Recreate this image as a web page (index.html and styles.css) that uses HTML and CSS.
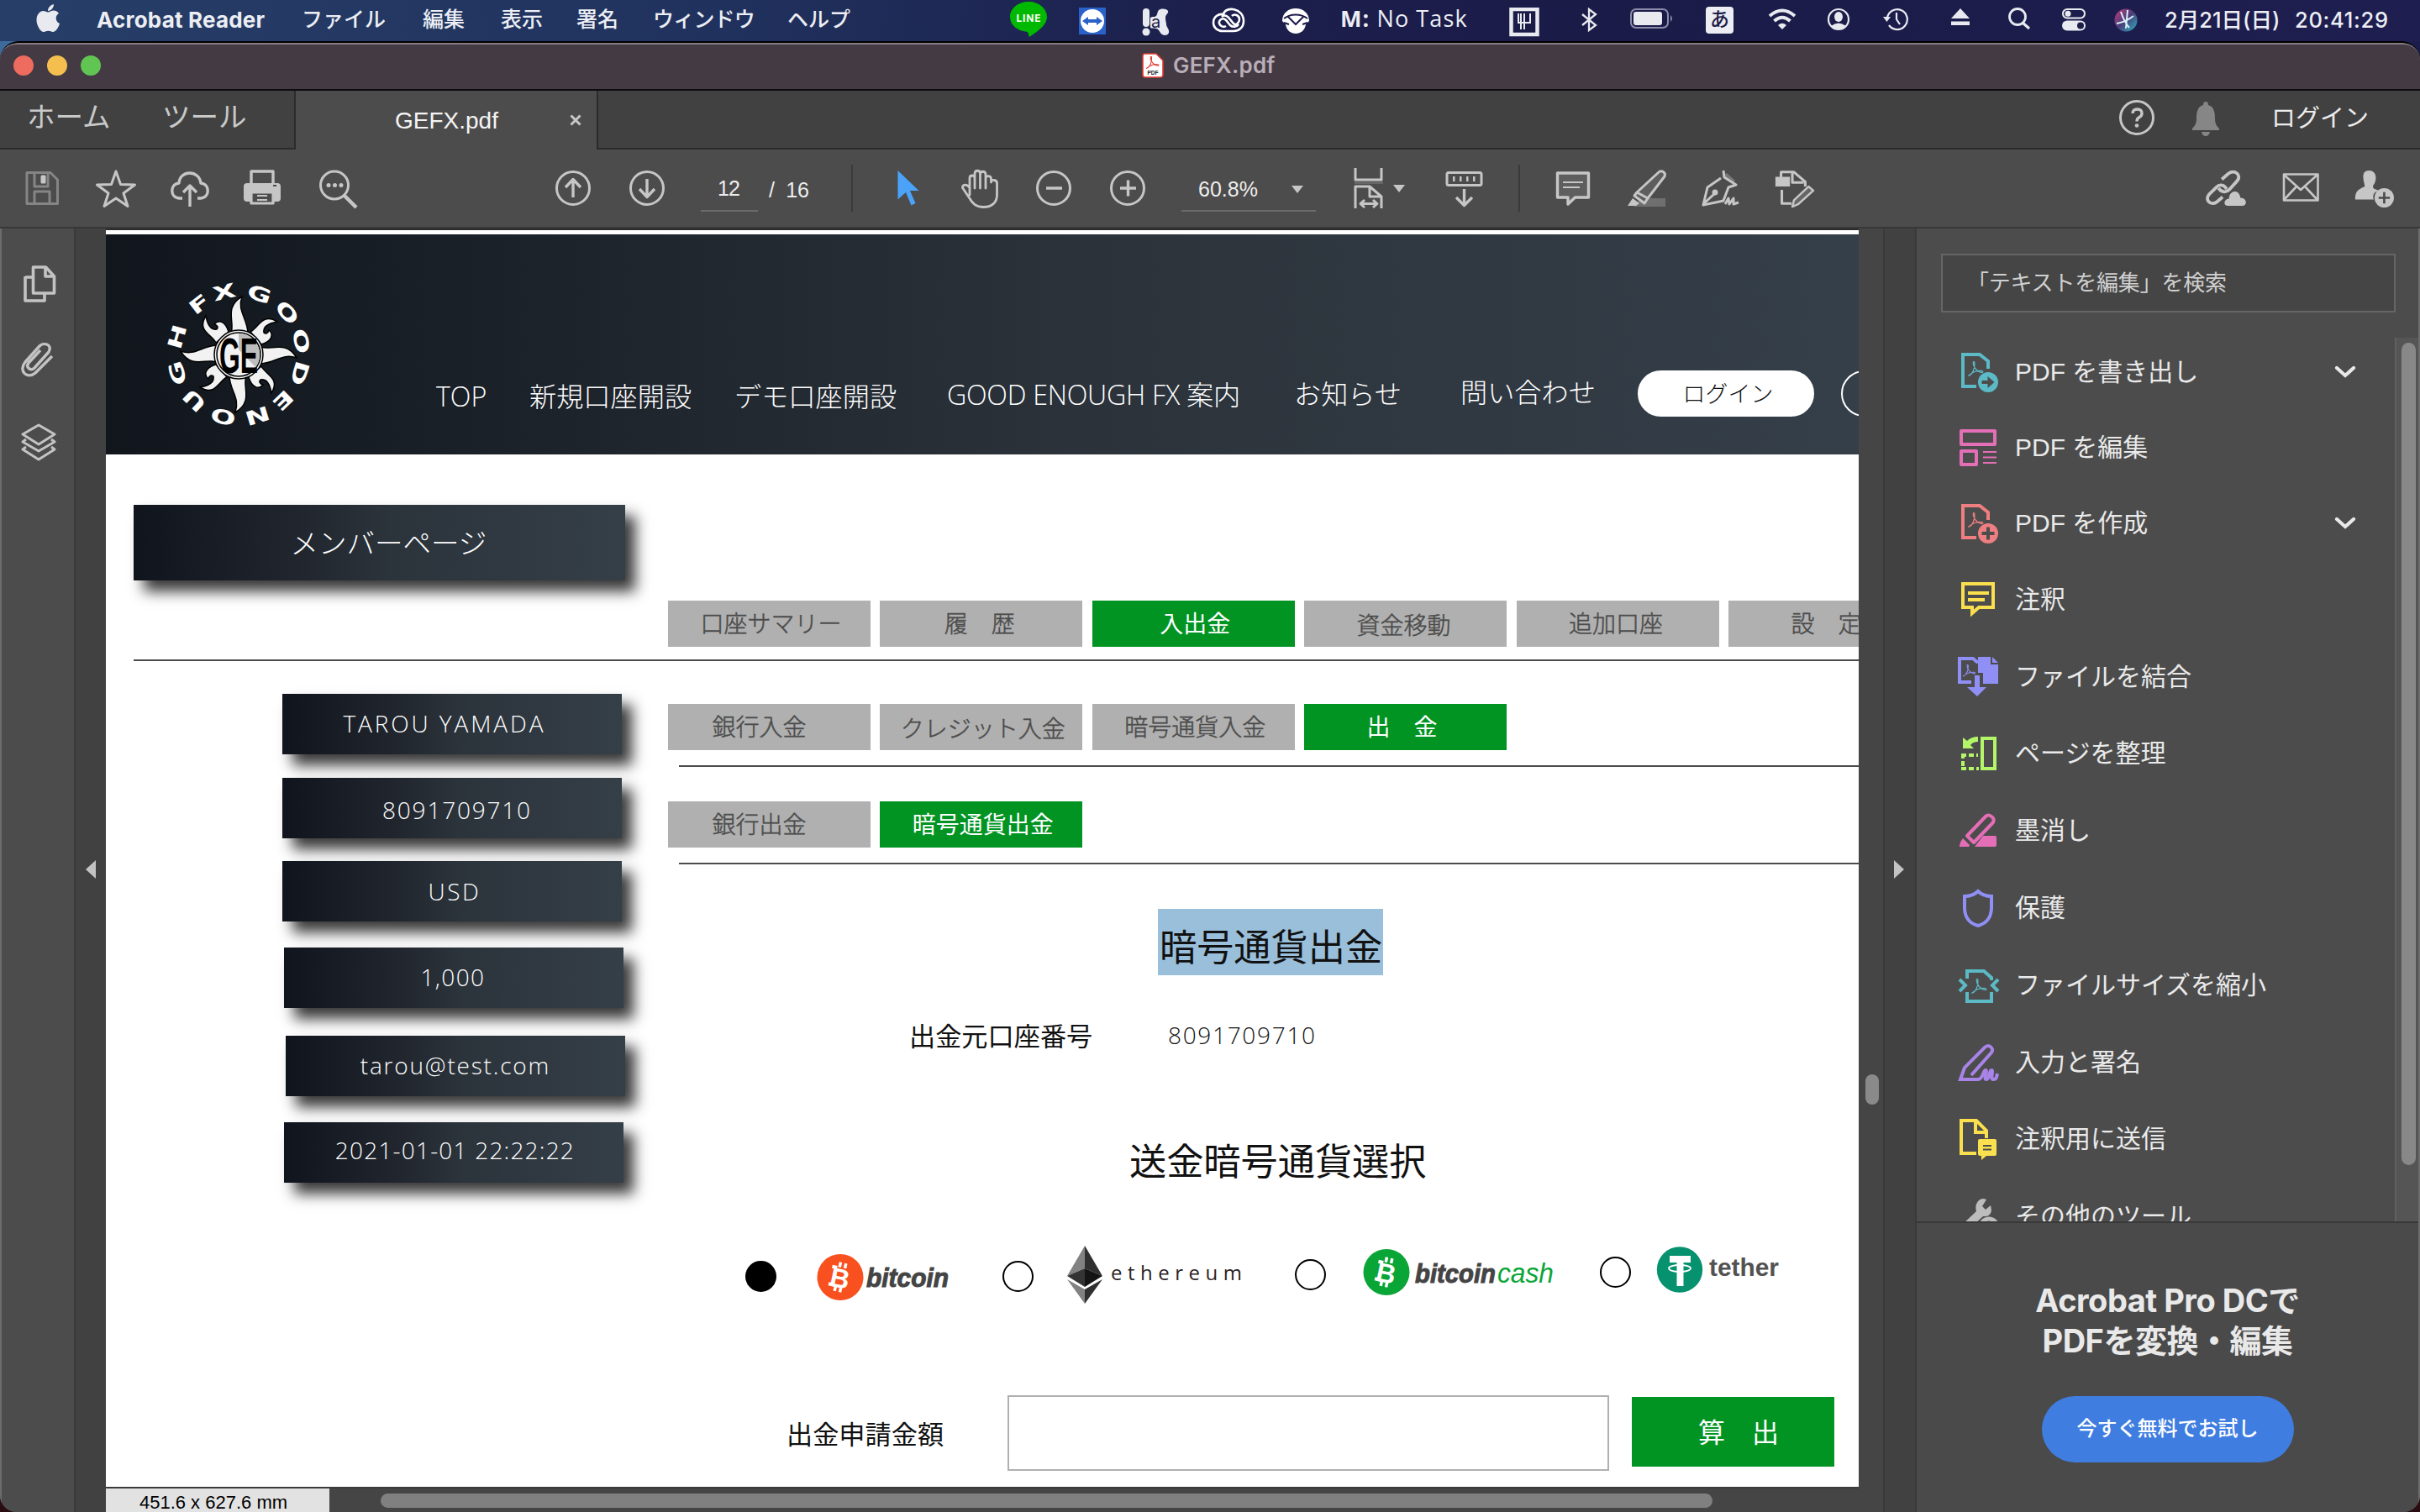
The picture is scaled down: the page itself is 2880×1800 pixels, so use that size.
FILE: index.html
```html
<!DOCTYPE html>
<html lang="ja">
<head>
<meta charset="utf-8">
<title>GEFX.pdf</title>
<link rel="stylesheet" href="styles.css">
</head>
<body>
<svg class="defs" width="0" height="0">
  <defs>
    <g id="pdfmark"><path d="M3 21C8 19 11 10 10.500 4C10.500 1 8.500 1 8.500 4C9 10 14 16 20 17C23 17.500 23 14.500 19.500 14.500C13 14.500 7 17 4 20C2 22 1 21.500 3 21Z" fill="none" stroke="currentColor" stroke-width="1.500"/></g>
    <linearGradient id="siri" x1="0" y1="0" x2="1" y2="1"><stop offset="0" stop-color="#c2397c"/><stop offset=".5" stop-color="#4a3f7a"/><stop offset="1" stop-color="#2bb7c4"/></linearGradient>
  </defs>
</svg>

<nav class="menubar">
  <svg viewBox="42 4 30 36" width="30" height="36"><path fill="#e8eaf0" d="M64 5c0 4-3 8-7 8 0-4 3-7 7-8zM57 14.500c2 0 4-2 7-2 2 0 4.500 1 6 3.500-5 3-4 10 1 12-1 4-4.500 10-8 10-2 0-3-1.200-5.500-1.200S54 38 52 38c-4 0-8.500-8-8.500-14 0-7 4-11 8-11 2.300 0 4 1.500 5.500 1.500z"/></svg>
  <b class="app">Acrobat Reader</b><span>ファイル</span><span>編集</span><span>表示</span><span>署名</span><span class="tight">ウィンドウ</span><span>ヘルプ</span>
  <svg viewBox="1202 1 44 44" width="44" height="44"><path fill="#00b900" d="M1224 2c12 0 22 8 22 18 0 9-9 16-21 24l-2-6c-12-1-21-8-21-18s10-18 22-18z"/><text class="line-t" x="1224" y="25.500" text-anchor="middle" textLength="29">LINE</text></svg>
  <svg viewBox="1284 8 32 32" width="32" height="32"><path fill="#2a62c9" d="M1284 8h32v32h-32z"/><circle cx="1300" cy="24" r="14" fill="#fff"/><path fill="#2a62c9" d="M1288 24l7-5v3h10v-3l7 5-7 5v-3h-10v3z"/></svg>
  <svg viewBox="1358 7 36 34" width="36" height="34"><g fill="#e8eaf0"><rect x="1360" y="8" width="8" height="22" rx="4"/><circle cx="1364" cy="36" r="4.500"/><path d="M1369 19c3-2 4 0 7-2 2-3 1-7 5-8 4-1 8 0 9 2 1 3-3 4-3 8s1 5 1 8 4 6 3 10c-1 3-5 4-8 2s-3-6-7-7-5 0-7-1z"/></g><text x="1370" y="31" font-size="20" fill="#1c1c48">a</text></svg>
  <svg viewBox="1442 11 40 30" width="40" height="30"><path fill="none" stroke="#fff" stroke-width="2.600" d="M1456 19c2-10 24-8 24 8 0 8-6 12-12 12h-13c-6 0-11-4-11-10 0-7 6-11 12-10zM1474 31c-2 3-7 4-10 1l-5-6c-4-4-9 0-8 4 1 3 5 5 8 3M1454 22c3-3 7-1 9 2l5 6c3 3 7-1 7-5 0-5-6-7-9-4"/></svg>
  <svg viewBox="1524 8 36 32" width="36" height="32"><path fill="#fff" d="M1526 24c0-9 7-15 16-15s16 6 16 15l-4 4c-1 7-6 11-12 11s-11-4-12-11z"/><path fill="none" stroke="#1c1c48" stroke-width="2" d="M1528 21c8-6 20-6 28 0M1533 19l9 9 9-9M1528 26l6 2M1556 26l-6 2"/></svg>
  <span class="task"><b>M:</b> No Task</span>
  <svg viewBox="1796 7 36 35" width="36" height="35"><rect x="1798.500" y="9" width="31" height="30" fill="none" stroke="#e8eaf0" stroke-width="4.500"/><path d="M1807 14v11h14V14M1814 14v19M1810 14v19" fill="none" stroke="#e8eaf0" stroke-width="2"/></svg>
  <svg viewBox="1880 7 24 30" width="24" height="30"><path d="M1883 15l16 13-8 6V9l8 6-16 13" fill="none" stroke="#e8eaf0" stroke-width="2.300"/></svg>
  <svg viewBox="1938 11 54 26" width="54" height="26"><rect x="1941" y="13" width="44" height="22" rx="6" fill="none" stroke="#8c8cab" stroke-width="2"/><rect x="1944" y="16" width="34" height="16" rx="3" fill="#e8eaf0"/><path d="M1988 20q4 4 0 8z" fill="#8c8cab"/></svg>
  <span class="ime">あ</span>
  <svg viewBox="2102 10 38 27" width="38" height="27"><path d="M2106 20q15-13 30 0M2111.500 26q9.500-8.500 19 0" fill="none" stroke="#e8eaf0" stroke-width="4"/><path d="M2116 31q5-4.500 10 0l-5 5z" fill="#e8eaf0"/></svg>
  <svg viewBox="2174 11 30 28" width="30" height="28"><circle cx="2188" cy="25" r="12" fill="none" stroke="#e8eaf0" stroke-width="2.200"/><ellipse cx="2188" cy="22" rx="5" ry="6" fill="#e8eaf0"/><path d="M2179 33q9-7 18 0-9 8-18 0z" fill="#e8eaf0"/></svg>
  <svg viewBox="2241 11 32 28" width="32" height="28"><path d="M2246 23a12 12 0 1 1 2 9M2257 17v8l4 6" fill="none" stroke="#e8eaf0" stroke-width="2.200"/><path d="M2241 22h9l-4.500 6z" fill="#e8eaf0"/></svg>
  <svg viewBox="2321 13 24 23" width="24" height="23"><path d="M2333 14l11 12h-22zM2322 29.500h22v4.500h-22z" fill="#e8eaf0"/></svg>
  <svg viewBox="2390 11 28 28" width="28" height="28"><circle cx="2401" cy="22" r="9.500" fill="none" stroke="#e8eaf0" stroke-width="2.800"/><path d="M2407 29l8 7" stroke="#e8eaf0" stroke-width="3.200"/></svg>
  <svg viewBox="2453 11 32 29" width="32" height="29"><rect x="2455" y="13" width="26" height="10.500" rx="5.200" fill="none" stroke="#e8eaf0" stroke-width="2"/><circle cx="2461" cy="18.200" r="3.500" fill="#e8eaf0"/><rect x="2454" y="26.500" width="28" height="12" rx="6" fill="#e8eaf0"/><circle cx="2476" cy="32.500" r="4" fill="#1c1c48"/></svg>
  <svg viewBox="2515 10 30 30" width="30" height="30"><circle cx="2530" cy="25" r="13.500" fill="url(#siri)"/><path d="M2519 29q11-2 20-9M2524 15q4 12 10 19M2530 35l2-22" stroke="#d8f2f8" stroke-width="2" fill="none"/></svg>
  <span class="clock">2月21日(日)</span><span class="clock time">20:41:29</span>
</nav>

<div class="window">
  <header class="titlebar">
    <i class="light red"></i><i class="light yellow"></i><i class="light green"></i>
    <div class="wtitle">
      <svg viewBox="0 0 26 30" width="26" height="30"><path d="M3 1h14l8 8v17q0 3-3 3H4q-3 0-3-3V4q0-3 2-3z" fill="#fff" stroke="#e0372c" stroke-width="1.600"/><g color="#e0372c" transform="translate(4 3) scale(.72)"><use href="#pdfmark"/></g><text x="6.500" y="26" class="pdf-t" textLength="13">PDF</text></svg>
      <b>GEFX.pdf</b>
    </div>
  </header>

  <div class="tabbar">
    <span class="home">ホーム</span><span class="tools-tab">ツール</span>
    <div class="tab"><span>GEFX.pdf</span><svg width="14" height="14" viewBox="0 0 14 14"><path d="M1.500 1.500l11 11M12.500 1.500l-11 11" stroke="#c8c8c8" stroke-width="3"/></svg></div>
    <svg class="help" viewBox="0 0 44 44" width="44" height="44"><circle cx="22" cy="22" r="19.500" fill="none" stroke="#c6c6c6" stroke-width="3"/><path d="M17 17q0-5 5.500-5t5.500 5q0 3-3 4.500t-3 5" fill="none" stroke="#c6c6c6" stroke-width="3.400"/><circle cx="22" cy="31.500" r="2.300" fill="#c6c6c6"/></svg>
    <svg class="bell" viewBox="0 0 36 42" width="36" height="42"><path d="M15 5q0-4 3-4t3 4c7 2 8 9 8 16 0 6 2 9 5 12v2H2v-2c3-3 5-6 5-12 0-7 1-14 8-16zM13 37h10q-1 5-5 5t-5-5z" fill="#868686"/></svg>
    <span class="signin">ログイン</span>
  </div>

  <div class="toolbar">
    <svg viewBox="28 200 48 48"><g fill="none" stroke="#858585" stroke-width="3"><path d="M32 205.500H60L68.500 214V242.500H32zM41 206v16h16v-16M41 242v-14h18v14" /></g><path d="M50 210h3v7h-3z" fill="#858585"/></svg>
    <svg viewBox="114 200 48 48"><path d="M138 204l5.500 15.500 17 .500-13.500 10 5 15.500-14-9.500-14 9.500 5-15.500-13.500-10 17-.500z"/></svg>
    <svg viewBox="202 200 48 48"><path d="M217 236h-4c-11-1-11-17 0-18 1-16 24-16 26 0 11 1 11 17 0 18h-4M226 246V222M218 229l8-8 8 8" stroke-width="3.400"/></svg>
    <svg viewBox="288 200 48 48"><path d="M299 218v-14h26v14" stroke-width="3.400"/><path d="M290 222q0-4 4-4h36q4 0 4 4v14q0 4-4 4h-36q-4 0-4-4z" fill="#c6c6c6" stroke="none"/><path d="M299 229h26v13h-26z" fill="#4c4c4c" stroke-width="3.200"/><path d="M306 233h12M306 238h12" stroke-width="2"/><path d="M325 220h4v2h-4z" fill="#4c4c4c" stroke="none"/></svg>
    <svg viewBox="378 200 48 48"><circle cx="398" cy="220.500" r="16.500" stroke-width="3"/><path d="M410 233l14 14" stroke-width="4.500"/><g fill="#c6c6c6" stroke="none"><circle cx="391" cy="220.500" r="2.500"/><circle cx="398.500" cy="220.500" r="2.500"/><circle cx="406" cy="220.500" r="2.500"/></g></svg>
    <svg viewBox="658 200 48 48"><circle cx="682" cy="224" r="19.500"/><path d="M682 235v-21M673 223l9-9.500 9 9.500" stroke-width="3.400"/></svg>
    <svg viewBox="746 200 48 48"><circle cx="770" cy="224" r="19.500"/><path d="M770 213v21M761 225l9 9.500 9-9.500" stroke-width="3.400"/></svg>
    <span class="page-in">12</span><span class="page-of">/&nbsp; 16</span>
    <i class="sep"></i>
    <svg viewBox="1063 200 48 48"><path d="M1067.500 203l25 24h-10.500l6.500 15-5 2.500-6.500-15.500-9.500 8.500z" fill="#4aa3f8" stroke="none"/></svg>
    <svg viewBox="1142 200 48 48"><path d="M1154 232v-20c0-4 6-4 6 0v12-17c0-5 6.500-5 6.500 0v17-16c0-5 6.500-5 6.500 0v16-11c0-5 6.500-4 6.500 0v4c0-4 7-3 7 1v14c0 9-6 14.500-16 14.500-9 0-13-4-17-11l-8-12c0-4 5-5 8.500 0z" stroke-width="2.800"/></svg>
    <svg viewBox="1228 199 48 48"><circle cx="1253" cy="223" r="19.500"/><path d="M1244 223h19" stroke-width="3.400"/></svg>
    <svg viewBox="1316 199 48 48"><circle cx="1341" cy="223" r="19.500"/><path d="M1332 223h19M1341.500 213.500v19" stroke-width="3.400"/></svg>
    <span class="zoom">60.8%<i class="tri"></i></span>
    <svg class="wide" viewBox="1608 200 66 48"><path d="M1613 200v14h31v-14M1613 248v-26h17l14 12v14M1630 222v12h14M1620 242.500h18M1624 238l-5 4.500 5 4.500M1634 238l5 4.500-5 4.500" stroke-width="3"/><path d="M1612 216h34v3h-34z" fill="#666" stroke="none"/><path d="M1658 220h14l-7 9z" fill="#c6c6c6" stroke="none"/></svg>
    <svg viewBox="1717 200 48 48"><rect x="1721" y="205.500" width="41" height="15" rx="2"/><path d="M1728 213h2.500M1736 213h2.500M1744 213h2.500M1752 213h2.500" stroke-width="6"/><path d="M1741.500 225v19M1732 235l9.500 9.500 9.500-9.500" stroke-width="3.400"/></svg>
    <i class="sep"></i>
    <svg viewBox="1850 200 48 48"><path d="M1853.500 206h37v29h-16l-8.500 8v-8h-12.500z" fill="#5e5e5e" stroke-width="3.400"/><path d="M1860 217h24M1860 223h20" stroke-width="2"/></svg>
    <svg viewBox="1934 200 48 48"><path d="M1952 236h30v10h-38z" fill="#6f6f6f" stroke="none"/><path d="M1974 205c3-3 9 0 7 5l-20 26-13-7zM1948 229l-3 4 12 9 4-6" fill="#5e5e5e" stroke-width="3"/><path d="M1943 236l8 6-4 3h-10z" fill="#c6c6c6" stroke="none"/></svg>
    <svg viewBox="2022 200 48 48"><path d="M2055 206l10 9 -3 4-12-10z" fill="#777" stroke="none"/><path d="M2051 203l1 8 14 9-9 3-6 16-24 5 5-21 16-11M2028 242l12-11" stroke-width="3"/><circle cx="2041" cy="229" r="3.500" fill="#c6c6c6" stroke="none"/><path d="M2053 243l4-7 1 7 5-7 0 7 6-2" stroke-width="3"/></svg>
    <svg viewBox="2109 200 50 48"><path d="M2119 211v-7h16l14 12v6M2133 204v13h14M2120 226v17h12" stroke-width="3.200"/><path d="M2112 210h18v12h-18z" fill="#c6c6c6" stroke="none"/><path d="M2153 222l6 5-19 17-7 3 2-8z" fill="#666" stroke-width="2.600"/></svg>
    <svg viewBox="2623 200 50 48"><path d="M2644 213l8-7c8-6 17 2 11 9l-10 11c-4 4-10 3-13-2M2650 225c-4-6-9-6-13-2l-9 9c-6 8 4 14 10 9l7-6" stroke-width="4"/><path d="M2651 246c-6-1-4-9 2-9 0-11 13-12 14-1 8 0 9 9 3 10z" fill="#c6c6c6" stroke="none"/></svg>
    <svg viewBox="2714 200 48 48"><path d="M2718 207.500h40.500v31h-40.500zM2718 208l20 18 20-18M2718 238l15-16M2758 238l-15-16" stroke-width="2.600"/></svg>
    <svg viewBox="2799 200 50 48"><path d="M2819 202c11 0 10 14 5 19 0 5 3 4 7 6-8 2-7 8-6 11h-23c0-10 3-12 12-16 0-4-7-20 5-20z" fill="#c6c6c6" stroke="none"/><circle cx="2838" cy="236" r="12" fill="#c6c6c6" stroke="none"/><path d="M2831 236h14M2838 229v14" stroke="#4c4c4c" stroke-width="2.800"/></svg>
  </div>

  <div class="work">
    <aside class="rail">
      <svg viewBox="23 312 46 50" width="46" height="50"><path d="M30 330h9M30 329v29h23v-8" stroke-width="3.600"/><path d="M39.500 318h15l10 11v20h-25zM54 318v11h10" stroke-width="3.600"/></svg>
      <svg viewBox="22 406 46 46" width="46" height="46"><path d="M48 416l-14 15c-4 6 3 10 7 6l17-19c5-9-6-12-11-7l-17 19c-9 11 3 21 12 13l20-20" stroke-width="3.400" transform="translate(-1 1)"/></svg>
      <svg viewBox="22 502 46 50" width="46" height="50"><path d="M45 506l19 11-19 12-19-12zM30 523l-4 3 19 11 19-11-4-3M30 532l-4 3 19 12 19-12-4-3" stroke-width="3"/></svg>
    </aside>
    <div class="gutter left"><i></i></div>

    <section class="viewer">
      <div class="page">
        <header class="site">
          <svg class="logo" viewBox="-91 -91 180 180" width="180" height="180">
            <g class="ring" fill="#fff" text-anchor="middle">
              <text transform="rotate(19) scale(1.550 1)" y="-68">G</text><text transform="rotate(49) scale(1.550 1)" y="-68">O</text><text transform="rotate(78) scale(1.550 1)" y="-68">O</text><text transform="rotate(107) scale(1.550 1)" y="-68">D</text><text transform="rotate(136) scale(1.550 1)" y="-68">E</text><text transform="rotate(163) scale(1.550 1)" y="-68">N</text><text transform="rotate(194) scale(1.550 1)" y="-68">O</text><text transform="rotate(224) scale(1.550 1)" y="-68">U</text><text transform="rotate(253) scale(1.550 1)" y="-68">G</text><text transform="rotate(286) scale(1.550 1)" y="-68">H</text><text transform="rotate(322) scale(1.550 1)" y="-68">F</text><text transform="rotate(347) scale(1.550 1)" y="-68">X</text>
            </g>
            <g fill="#f2f2f2" stroke="#000" stroke-width="1.500">
              <path id="ray" d="M-9 -26C-4 -38 -18 -56 4 -69C-2 -52 10 -44 11 -26Z"/><use href="#ray" transform="rotate(90)"/><use href="#ray" transform="rotate(180)"/><use href="#ray" transform="rotate(270)"/>
              <path id="curl" d="M-27 -14C-32 -24 -50 -28 -39 -46C-37 -34 -32 -29 -26 -30C-24 -32 -25 -35 -29 -36C-24 -42 -16 -40 -12 -27Z"/><use href="#curl" transform="rotate(90)"/><use href="#curl" transform="rotate(180)"/><use href="#curl" transform="rotate(270)"/>
              <circle r="29"/><circle r="26" fill="#f2f2f2"/>
            </g>
            <path d="M0 -25a25 25 0 0 1 20 40L0 -6z" fill="#bdbdbd"/>
            <text class="ge" y="22" text-anchor="middle" textLength="46" lengthAdjust="spacingAndGlyphs">GE</text>
          </svg>
          <div class="nav">
            <span>TOP</span><span>新規口座開設</span><span>デモ口座開設</span><span class="gefx">GOOD ENOUGH FX 案内</span><span class="up3">お知らせ</span><span class="up5">問い合わせ</span>
            <span class="pill">ログイン</span><span class="pill ghost"></span>
          </div>
        </header>

        <h1 class="member">メンバーページ</h1>
        <div class="tabs main-tabs"><span>口座サマリー</span><span class="m">履　歴</span><span class="on">入出金</span><span class="low m">資金移動</span><span class="m">追加口座</span><span class="mm">設　定</span></div>
        <hr class="rule full">

        <div class="cols">
          <div class="cards">
            <span class="c1">TAROU YAMADA</span><span class="c2">8091709710</span><span class="c3">USD</span><span class="c4">1,000</span><span class="c5">tarou@test.com</span><span class="c6">2021-01-01 22:22:22</span>
          </div>
          <div class="content">
            <div class="tabs sub1"><span class="l">銀行入金</span><span class="low">クレジット入金</span><span>暗号通貨入金</span><span class="on mm">出　金</span></div>
            <hr class="rule">
            <div class="tabs sub2"><span class="l">銀行出金</span><span class="on">暗号通貨出金</span></div>
            <hr class="rule">
            <h2><mark>暗号通貨出金</mark></h2>
            <div class="acct"><span>出金元口座番号</span><span class="num">8091709710</span></div>
            <h2 class="choose">送金暗号通貨選択</h2>
            <div class="coins">
              <i class="radio sel"></i>
              <svg class="btc" viewBox="972 1484 162 72" width="162" height="72"><circle cx="1000" cy="1521.500" r="27.500" fill="#f9501f"/><g transform="rotate(12 1000 1521.500)" fill="#fff"><text class="bsym" x="1000" y="1534" text-anchor="middle">B</text><path d="M995 1504h3.500v6h-3.500zM1001.500 1504h3.500v6h-3.500zM995 1533h3.500v6h-3.500zM1001.500 1533h3.500v6h-3.500zM988 1509h6v4h-6zM988 1530h6v4h-6z"/></g><text class="brand" x="1031" y="1533" textLength="98" lengthAdjust="spacingAndGlyphs">bitcoin</text></svg>
              <i class="radio r2"></i>
              <svg class="eth" viewBox="1268 1482 214 74" width="214" height="74"><path d="M1291 1484l-21 36 21-9z" fill="#828282"/><path d="M1291 1484l21 36-21-9z" fill="#303030"/><path d="M1270 1520l21-9v22z" fill="#343434"/><path d="M1312 1520l-21-9v22z" fill="#141414"/><path d="M1270 1524l21 12v17z" fill="#828282"/><path d="M1312 1524l-21 12v17z" fill="#303030"/><text class="etht" x="1322" y="1524.500" textLength="156">ethereum</text></svg>
              <i class="radio r3"></i>
              <svg class="bch" viewBox="1622 1484 230 64" width="230" height="64"><circle cx="1650" cy="1515.500" r="27.500" fill="#0aa537"/><g transform="rotate(12 1650 1515.500)" fill="#fff"><text class="bsym" x="1650" y="1528" text-anchor="middle">B</text><path d="M1645 1498h3.500v6h-3.500zM1651.500 1498h3.500v6h-3.500zM1645 1527h3.500v6h-3.500zM1651.500 1527h3.500v6h-3.500zM1638 1503h6v4h-6zM1638 1524h6v4h-6z"/></g><text class="brand" x="1684" y="1528" textLength="96" lengthAdjust="spacingAndGlyphs">bitcoin</text><text class="cash" x="1782" y="1528" textLength="67" lengthAdjust="spacingAndGlyphs">cash</text></svg>
              <i class="radio r4"></i>
              <svg class="usdt" viewBox="1971 1484 152 58" width="152" height="58"><circle cx="1999" cy="1513.500" r="27.200" fill="#06916f"/><path d="M1987 1497h25v8h-8.500v28h-8v-28H1987z" fill="#fff"/><ellipse cx="1999" cy="1512" rx="13" ry="4" fill="none" stroke="#fff" stroke-width="1.800"/><text class="teth" x="2034" y="1521" textLength="83" lengthAdjust="spacingAndGlyphs">tether</text></svg>
            </div>
            <div class="amount"><span>出金申請金額</span><i class="field"></i><span class="calc">算　出</span></div>
          </div>
        </div>
      </div>
      <div class="hbar"><span class="size">451.6 x 627.6 mm</span><i class="hthumb"></i></div>
    </section>
    <div class="vbar"><i></i></div>
    <div class="gutter right"><i></i></div>

    <aside class="panel">
      <div class="search">「テキストを編集」を検索</div>
      <div class="list">
        <ul>
          <li class="s"><svg color="#5bbac5" viewBox="0 0 50 50"><path d="M21 42H5V4H25L35 12V21" stroke-width="4"/><g transform="translate(10 11) scale(.85)"><use href="#pdfmark"/></g><circle cx="35" cy="37" r="12" fill="currentColor" stroke="none"/><path d="M27.500 35h7v-5l8 7-8 7v-5h-7z" fill="#4c4c4c" stroke="none"/></svg>PDF を書き出し<svg class="chev" viewBox="0 0 26 16"><path d="M3 3l10 9 10-9" stroke-width="4.200"/></svg></li>
          <li class="s"><svg color="#e46fb6" viewBox="0 0 50 50"><path d="M3 5h40v16H3zM3 29h18v16H3z" stroke-width="4" stroke-linejoin="round"/><path d="M29 30h16M29 36.500h16M29 43h16" stroke-width="2.200"/></svg>PDF を編集</li>
          <li class="s"><svg color="#ee7e80" viewBox="0 0 50 50"><path d="M21 42H5V4H25L35 12V21" stroke-width="4"/><g transform="translate(10 11) scale(.85)"><use href="#pdfmark"/></g><circle cx="35" cy="37" r="12" fill="currentColor" stroke="none"/><path d="M27.500 37h15M35 29.500v15" stroke="#4c4c4c" stroke-width="4"/></svg>PDF を作成<svg class="chev" viewBox="0 0 26 16"><path d="M3 3l10 9 10-9" stroke-width="4.200"/></svg></li>
          <li><svg color="#fae04f" viewBox="0 0 50 50"><path d="M5 6h36v28H24l-8 7v-7H5z" stroke-width="4"/><path d="M11 17h25M11 25h20" stroke-width="4"/></svg>注釈</li>
          <li><svg color="#908ff5" viewBox="0 0 50 50"><path d="M15 31H1V3h16l6 5" stroke-width="4"/><g transform="translate(4 9) scale(.7)"><use href="#pdfmark"/></g><path d="M23 1h15v9h9v23H29V20h-6zM40 1l7 7h-7z" fill="currentColor" stroke="none"/><path d="M19 23h6v14h8L22 48 10 37h9z" fill="currentColor" stroke="none"/></svg>ファイルを結合</li>
          <li><svg color="#b4f669" viewBox="0 0 50 50"><path d="M28 7h15v36H28z" stroke-width="4"/><path d="M3 27h20M5 25v20M3 43h21" stroke-width="4" stroke-dasharray="6 3"/><path d="M23 5v6q-6 0-9 4l4 4H5V6l5 4q5-5 13-5z" fill="currentColor" stroke="none"/></svg>ページを整理</li>
          <li><svg color="#e46fb6" viewBox="0 0 50 50"><path d="M32 8q3-3 7 0t2 7L18 39l-8-8z" stroke-width="4" stroke-linejoin="round"/><path d="M5 34l8 8-1 2H1q0-5 4-10zM29 31h14q2 0 2 2v9q0 2-2 2H19z" fill="currentColor" stroke="none"/></svg>墨消し</li>
          <li><svg color="#908ff5" viewBox="0 0 50 50"><path d="M23 5q6 6 16 6v15q-1 16-16 20Q8 42 7 26V11q10 0 16-6z" stroke-width="4"/></svg>保護</li>
          <li><svg color="#5bbac5" viewBox="0 0 50 50"><path d="M10 17V8H30l9 8v3M10 33v11H39V33" stroke-width="4"/><path d="M1 18l7 7-7 7M47 18l-7 7 7 7" stroke-width="4"/><g transform="translate(14 16) scale(.85)"><use href="#pdfmark"/></g></svg>ファイルサイズを縮小</li>
          <li><svg color="#a984e8" viewBox="0 0 50 50"><path d="M15 40L39 13c4-5-4-11-8-6L7 31 2 45h21c6 0 6-11 9-11s-3 11 1 11 3-11 6-11-2 11 2 11 4-2 5-7" stroke-width="4"/></svg>入力と署名</li>
          <li><svg color="#fae04f" viewBox="0 0 50 50"><path d="M21 42H3V3H21L33 15v9M20 3v14h13" stroke-width="4"/><path d="M25 25h18q2 0 2 2v16q0 2-2 2H33l-6 5v-5q-4 0-4-2V27q0-2 2-2z" fill="currentColor" stroke="none"/><path d="M29 33h10M29 37.500h10" stroke="#4c4c4c" stroke-width="2"/></svg>注釈用に送信</li>
          <li><svg color="#bdbdbd" viewBox="0 0 50 50"><path d="M33 5q-6-3-10 2t-2 12L1 38l6 7 22-20q9 1 10-7l-1-6-6 5-4-4z" fill="currentColor" stroke="none"/><circle cx="36" cy="38" r="10" stroke-width="5"/></svg>その他のツール</li>
        </ul>
        <div class="track"><i></i></div>
      </div>
      <div class="promo"><b>Acrobat Pro DCで<br>PDFを変換・編集</b><span>今すぐ無料でお試し</span></div>
    </aside>
  </div>
</div>
</body>
</html>
```
FILE: styles.css
```css
* { box-sizing: border-box; }
html, body { margin: 0; width: 2880px; height: 1800px; overflow: hidden; }
body {
  background: linear-gradient(90deg, #3f6a9d 0, #4787b8 20%, #1b1b48 20.500%, #1c1c4c) 0 0 / 100% 80px no-repeat, #2a0d12;
  font-family: "Inter", "Liberation Sans", "Noto Sans CJK JP", sans-serif;
  display: flex; flex-direction: column;
}
svg { display: block; flex: none; }
svg.defs { position: absolute; }

.menubar {
  flex: none; height: 49px; padding-left: 42px;
  display: grid; align-items: start;
  grid-template-columns: 73px 244px 144px 93px 90px 91px 160px 265px 82px 74px 84px 82px 71px 201px 84px 58px 92px 72px 72px 67px 80px 69px 63px 62px 61px 155px 1fr;
  background: linear-gradient(90deg, #273f68, #20315d 30%, #1c1f4c 50%, #1b1b48 65%, #1e1e50);
  color: #eceef4; font-size: 25px; line-height: 46px; white-space: nowrap;
}
.menubar > svg:nth-of-type(1) { margin-top: 4px; }
.menubar > svg { margin-top: 9px; }
.menubar > svg:nth-of-type(2) { margin-top: 1px; }
.menubar > span { font-weight: 500; }
.menubar .tight { letter-spacing: -.8px; }
.menubar .app { font-size: 26px; font-weight: 700; letter-spacing: .2px; line-height: 47px; }
.menubar .task { font-family: "Open Sans", sans-serif; font-size: 27px; font-weight: 400; line-height: 44px; letter-spacing: 1.100px; }
.menubar .clock { font-size: 25.500px; font-weight: 500; line-height: 47px; }
.menubar .time { letter-spacing: .7px; }
.menubar .ime { width: 33px; height: 32px; margin-top: 8px; background: #eceef4; color: #1c1c48; border-radius: 4px; font-size: 23px; line-height: 31px; text-align: center; }
.line-t { font: 700 12px "Inter", sans-serif; fill: #fff; }
.pdf-t { font: 700 6.500px "Liberation Sans", sans-serif; fill: #222; }

.window { flex: none; height: 1751px; border: 2px solid #000; border-width: 2px 0 0; border-radius: 22px 22px 20px 20px; overflow: hidden; background: #4c4c4c; display: flex; flex-direction: column; }
.titlebar { flex: none; height: 57px; background: #443a43; border-top: 2px solid #857c84; border-bottom: 2px solid #0c0c0c; border-radius: 20px 20px 0 0; display: flex; align-items: center; padding: 0 0 3px 16px; gap: 16px; }
.light { width: 24px; height: 24px; border-radius: 50%; }
.red { background: #ed6b5f; }
.yellow { background: #f5bf4f; }
.green { background: #61c554; }
.wtitle { display: flex; align-items: center; gap: 11px; margin-left: 1223px; color: #b9aeb8; font-size: 26px; line-height: 30px; }
.wtitle b { font-weight: 600; letter-spacing: .2px; }

.tabbar { flex: none; height: 70px; background: #414141; display: flex; align-items: flex-start; color: #c9c9c9; font-size: 33.500px; line-height: 63px; border-bottom: 2px solid #2b2b2b; }
.home { width: 161px; margin-left: 32px; }
.tools-tab { width: 157px; }
.tab { flex: none; width: 362px; height: 70px; background: #4c4c4c; border: solid #2b2b2b; border-width: 0 2px; display: flex; align-items: center; color: #f4f4f4; font: 28px/70px "Liberation Sans", sans-serif; padding-left: 118px; padding-bottom: 2px; }
.tab span { width: 208px; padding-top: 4px; }
.tab svg { margin-top: 2px; }
.help { margin: 10px 0 0 1809px; }
.bell { margin: 12px 0 0 42px; }
.signin { margin-left: 60px; font-size: 29px; font-weight: 400; color: #ececec; line-height: 65px; white-space: nowrap; }

.toolbar {
  flex: none; height: 94px; background: #4c4c4c; border-bottom: 2px solid #383838; padding: 22px 0 0 28px;
  display: grid; align-items: start;
  grid-template-columns: 86px 88px 86px 90px 280px 88px 88px 81px 98px 51px 78px 87px 88px 89px 202px 110px 89px 43px 84px 88px 88px 514px 90px 86px 1fr;
  color: #ececec; font: 25px/49px "Liberation Sans", sans-serif;
}
.toolbar svg { width: 48px; height: 48px; fill: none; stroke: #c6c6c6; stroke-width: 3; stroke-linejoin: round; overflow: visible; }
.toolbar svg.wide { width: 66px; }
.page-in { width: 68px; height: 52px; border-bottom: 2px solid #6b6b6b; padding-left: 20px; letter-spacing: -1px; }
.page-of { line-height: 52px; letter-spacing: -.2px; }
.sep { width: 2px; height: 56px; margin-top: -4px; background: #3a3a3a; }
.zoom { width: 160px; height: 52px; border-bottom: 2px solid #6b6b6b; padding: 0 15px 0 20px; display: flex; justify-content: space-between; align-items: center; }
.tri { border: solid transparent; border-width: 9px 7.500px 0; border-top-color: #c6c6c6; }

.work { flex: 1; display: flex; min-height: 0; }
.rail { width: 90px; border-right: 2px solid #3a3a3a; border-left: 2px solid #6c6c6c; background: #4c4c4c; padding: 40px 0 0 21px; }
.rail svg { fill: none; stroke: #c3c3c3; stroke-linejoin: round; }
.rail svg + svg { margin-top: 44px; }
.rail svg + svg + svg { margin-top: 50px; }
.gutter { width: 36px; background: #414141; display: flex; }
.gutter i { margin-top: 752px; height: 22px; border: solid transparent; border-width: 11px 0; }
.gutter.left i { margin-left: 12px; border-right: 12px solid #c3c3c3; }
.gutter.right { width: 38px; border-right: 2px solid #393939; }
.gutter.right i { margin-left: 11px; border-left: 12px solid #c3c3c3; }

.viewer { width: 2087px; display: flex; flex-direction: column; overflow: hidden; }
.page { height: 1498px; border-top: 2px solid #2b2b2b; background: #fff; overflow: hidden; flex: none; font-family: "Open Sans", "Noto Sans CJK JP", sans-serif; font-weight: 300; }
.site { height: 267px; border-top: 5px solid #fff; display: flex; background: linear-gradient(90deg, #11161d, #2b323a 55%, #353f49) padding-box; color: #fff; }
.logo { margin: 52px 0 0 67px; }
.ring { font: 700 23px "DejaVu Sans", sans-serif; }
.ge { font: 900 60px "Liberation Sans", sans-serif; fill: #000; }
.nav { flex: none; margin-left: 146px; display: grid; align-items: start; grid-template-columns: 111px 244px 253px 413px 198px 211px 242px 209px; font-size: 32.200px; line-height: 47px; padding-top: 169px; white-space: nowrap; }
.nav .gefx { margin-top: -2px; letter-spacing: -.25px; }
.nav .up3 { margin-top: -3px; }
.nav .up5 { margin-top: -5px; }
.pill { width: 210px; height: 55px; margin-top: -7px; border-radius: 28px; background: #fff; color: #111; font-size: 27px; line-height: 51px; text-align: center; border: 2px solid #fff; padding-left: 5px; }
.ghost { background: none; }

.member, .cards span { background: linear-gradient(90deg, #10141c, #22272f 35%, #2b333b 52%, #353f48); color: #fff; text-align: center; font-weight: 300; box-shadow: 12px 13px 16px rgba(0, 0, 0, .78); }
.member { width: 585px; height: 90px; margin: 60px 0 0 33px; font-size: 33.500px; line-height: 91px; padding-left: 22px; }
.tabs { display: flex; gap: 11.400px; font-size: 28px; height: 55px; line-height: 55px; white-space: nowrap; }
.tabs span { flex: none; width: 241px; background: #b0b0b0; color: #4c4c4c; text-align: center; padding-left: 4px; font-weight: 300; -webkit-text-stroke: .5px #4c4c4c; }
.tabs .on { background: #029423; color: #fff; font-weight: 400; line-height: 54px; -webkit-text-stroke: 0; }
.tabs .low { line-height: 59px; }
.tabs .l { padding-right: 28px; }
.tabs .m { padding: 0 4px 0 0; }
.tabs .mm { padding: 0 8px 0 0; }
.main-tabs { margin: 24px 0 0 669px; }
.rule { margin: 0 0 0 13px; border: 0; height: 2px; background: #4c4c4c; }
.rule.full { margin: 15px 0 0 33px; }
.cols { display: flex; }
.cards { width: 669px; flex: none; padding: 39px 0 0 210px; display: flex; flex-direction: column; align-items: flex-start; }
.cards span { width: 404px; height: 72px; font-size: 28px; line-height: 70px; letter-spacing: 1.400px; margin-bottom: 27.500px; white-space: nowrap; }
.cards .c1 { letter-spacing: 2.900px; padding-right: 18px; line-height: 71px; }
.cards .c2 { line-height: 76px; padding-left: 12px; letter-spacing: 1.800px; }
.cards .c3 { line-height: 73px; padding-left: 6px; margin-bottom: 31px; letter-spacing: 2.600px; }
.cards .c4 { margin-left: 2px; margin-bottom: 33px; padding-right: 2px; }
.cards .c5 { margin-left: 4px; margin-bottom: 30.500px; letter-spacing: 1.800px; }
.cards .c6 { margin-left: 2px; line-height: 66px; letter-spacing: 1.200px; padding-left: 3px; }
.content { flex: none; width: 1417px; }
.sub1 { margin: 51px 0 18px; height: 55px; }
.sub2 { margin: 41px 0 18px; height: 55px; }
h2 { margin: 53px 0 0; height: 79px; padding-left: 583px; font-size: 44.200px; line-height: 91px; font-weight: 400; color: #111; }
mark { display: block; width: 268px; height: 79px; padding-left: 2px; background: #9abfdb; color: #111; white-space: nowrap; }
.acct { margin: 48px 0 1px 287px; display: flex; font-size: 31.200px; line-height: 48px; font-weight: 400; color: #111; }
.acct span { width: 308px; }
.acct .num { font-size: 28px; letter-spacing: 1.700px; font-weight: 300; line-height: 47px; white-space: nowrap; }
h2.choose { margin-top: 78px; padding-left: 549px; height: 60px; line-height: 94px; }
.coins { display: flex; align-items: flex-start; margin: 86px 0 0 92px; height: 74px; }
.radio { flex: none; width: 37px; height: 37px; border: 2px solid #000; border-radius: 50%; margin-top: 20px; }
.sel { background: #000; }
.btc { margin: 2px 0 0 48px; }
.r2 { margin-left: 59px; }
.eth { margin-left: 38px; }
.r3 { margin: 18px 0 0 59px; }
.bch { margin: 2px 0 0 44px; }
.r4 { margin: 15px 0 0 52px; }
.usdt { margin: 1px 0 0 30px; }
.bsym { font: 700 32px "Liberation Sans", sans-serif; }
.brand { font: italic 700 31px "Liberation Sans", sans-serif; fill: #444; stroke: #444; stroke-width: 1; }
.cash { font: italic 400 34px "Liberation Sans", sans-serif; fill: #0aa537; }
.etht { font: 400 24px "Open Sans", sans-serif; fill: #2b2424; }
.teth { font: 700 30px "Liberation Sans", sans-serif; fill: #525252; }
.amount { display: flex; margin: 106px 0 0 141px; font-size: 31.200px; font-weight: 400; color: #111; }
.amount > span:first-child { width: 263px; line-height: 93px; }
.field { width: 716px; height: 90px; border: 2px solid #b0b0b0; }
.calc { width: 241px; height: 83px; margin: 2px 0 0 27px; background: #029423; color: #fff; font-size: 32px; line-height: 83px; padding-left: 79px; }

.hbar { flex: 1; background: #454545; display: flex; border-top: 2px solid #3b3b3b; }
.size { width: 266px; background: #e2e2e2; color: #000; font: 22px/33px "Liberation Sans", sans-serif; padding-left: 40px; white-space: nowrap; }
.hthumb { width: 1585px; height: 17px; margin: 6px 0 0 61px; border-radius: 9px; background: #808080; }
.vbar { width: 31px; background: #454545; border-right: 2px solid #3a3a3a; }
.vbar i { display: block; width: 16px; height: 36px; margin: 1007px 0 0 8px; border-radius: 8px; background: #8a8a8a; }

.panel { flex: 1; border-right: 2px solid #6c6c6c; display: flex; flex-direction: column; color: #e9e9e9; }
.search { flex: none; width: 541px; height: 70px; margin: 30px 0 30px 29px; border: 2px solid #666; background: #454545; color: #cfcfcf; font-size: 26px; line-height: 65px; padding-left: 29px; white-space: nowrap; letter-spacing: -.2px; }
.list { flex: none; height: 1054px; display: flex; overflow: hidden; border-bottom: 2px solid #393939; }
ul { margin: -4px 0 0; padding: 0; list-style: none; width: 569px; flex: none; font-size: 30px; }
li { height: 91.800px; display: flex; align-items: center; padding-left: 50px; white-space: nowrap; font-family: "Liberation Sans", "Noto Sans CJK JP", sans-serif; line-height: 48px; }
li.s { height: 90px; }
li svg { width: 50px; height: 50px; margin-right: 17px; fill: none; stroke: currentColor; overflow: visible; }
li .chev { width: 26px; height: 16px; margin: 0 46px 0 auto; stroke-linecap: round; }
.track { width: 28px; background: #555; border-left: 2px solid #606060; }
.track i { display: block; width: 17px; height: 979px; margin: 6px 0 0 6px; border-radius: 9px; background: #888; }
.promo { display: flex; flex-direction: column; align-items: center; text-align: center; padding-top: 68px; background: #4a4a4a; flex: 1; }
.promo b { font-size: 38px; line-height: 48px; letter-spacing: -.5px; white-space: nowrap; }
.promo span { margin-top: 42px; width: 300px; height: 79px; border-radius: 40px; background: #3f7ee0; color: #fff; font-size: 24px; font-weight: 500; line-height: 78px; }
```
